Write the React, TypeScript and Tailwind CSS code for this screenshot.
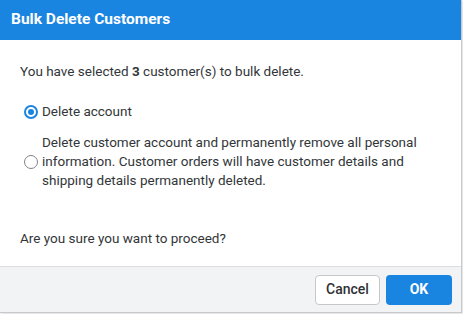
import { useState } from "react";

export default function App() {
  const [choice, setChoice] = useState<"delete" | "purge">("delete");

  return (
    <div className="w-[463px] h-[314px] bg-white font-['Roboto',sans-serif]">
      <div className="w-[462px] h-[313px] flex flex-col border-r border-b border-[#c8c9cc] shadow-[1px_1px_2px_rgba(0,0,0,0.15)]">
        {/* Header */}
        <div className="h-10 bg-[#1a84e1] flex items-center px-[11px]">
          <h1 className="text-white text-[15.5px] font-bold">Bulk Delete Customers</h1>
        </div>

        {/* Body */}
        <div className="flex-1 px-5 pt-[22px] text-[13.5px] text-[#333639] leading-[19px]">
          <p>
            You have selected <span className="font-bold">3</span> customer(s) to bulk delete.
          </p>

          <div className="mt-[21px] space-y-[12px] pl-[4px]">
            <label className="flex items-center gap-[4px] cursor-pointer" onClick={() => setChoice("delete")}>
              <Radio checked={choice === "delete"} />
              <span>Delete account</span>
            </label>
            <label className="flex items-center gap-[4px] cursor-pointer" onClick={() => setChoice("purge")}>
              <Radio checked={choice === "purge"} />
              <span>
                Delete customer account and permanently remove all personal information. Customer orders will have customer details and shipping details permanently deleted.
              </span>
            </label>
          </div>

          <p className="mt-[39px]">Are you sure you want to proceed?</p>
        </div>

        {/* Footer */}
        <div className="h-[46px] bg-[#f2f3f5] border-t border-[#dcdde0] flex items-center justify-end gap-[6px] pr-[9px]">
          <button className="h-[30px] w-[65px] rounded-[4px] border border-[#c6c8cc] bg-white text-[14px] font-medium text-[#2f3236]">
            Cancel
          </button>
          <button className="h-[30px] w-[66px] rounded-[4px] bg-[#1a84e1] text-[14px] font-bold text-white">
            OK
          </button>
        </div>
      </div>
    </div>
  );
}

function Radio({ checked }: { checked: boolean }) {
  return (
    <span
      className={
        checked
          ? "shrink-0 w-[14px] h-[14px] rounded-full border-[2px] border-[#1a84e1] flex items-center justify-center"
          : "shrink-0 w-[14px] h-[14px] rounded-full border-[1.5px] border-[#80848a]"
      }
    >
      {checked && <span className="w-[6px] h-[6px] rounded-full bg-[#1a84e1]" />}
    </span>
  );
}
